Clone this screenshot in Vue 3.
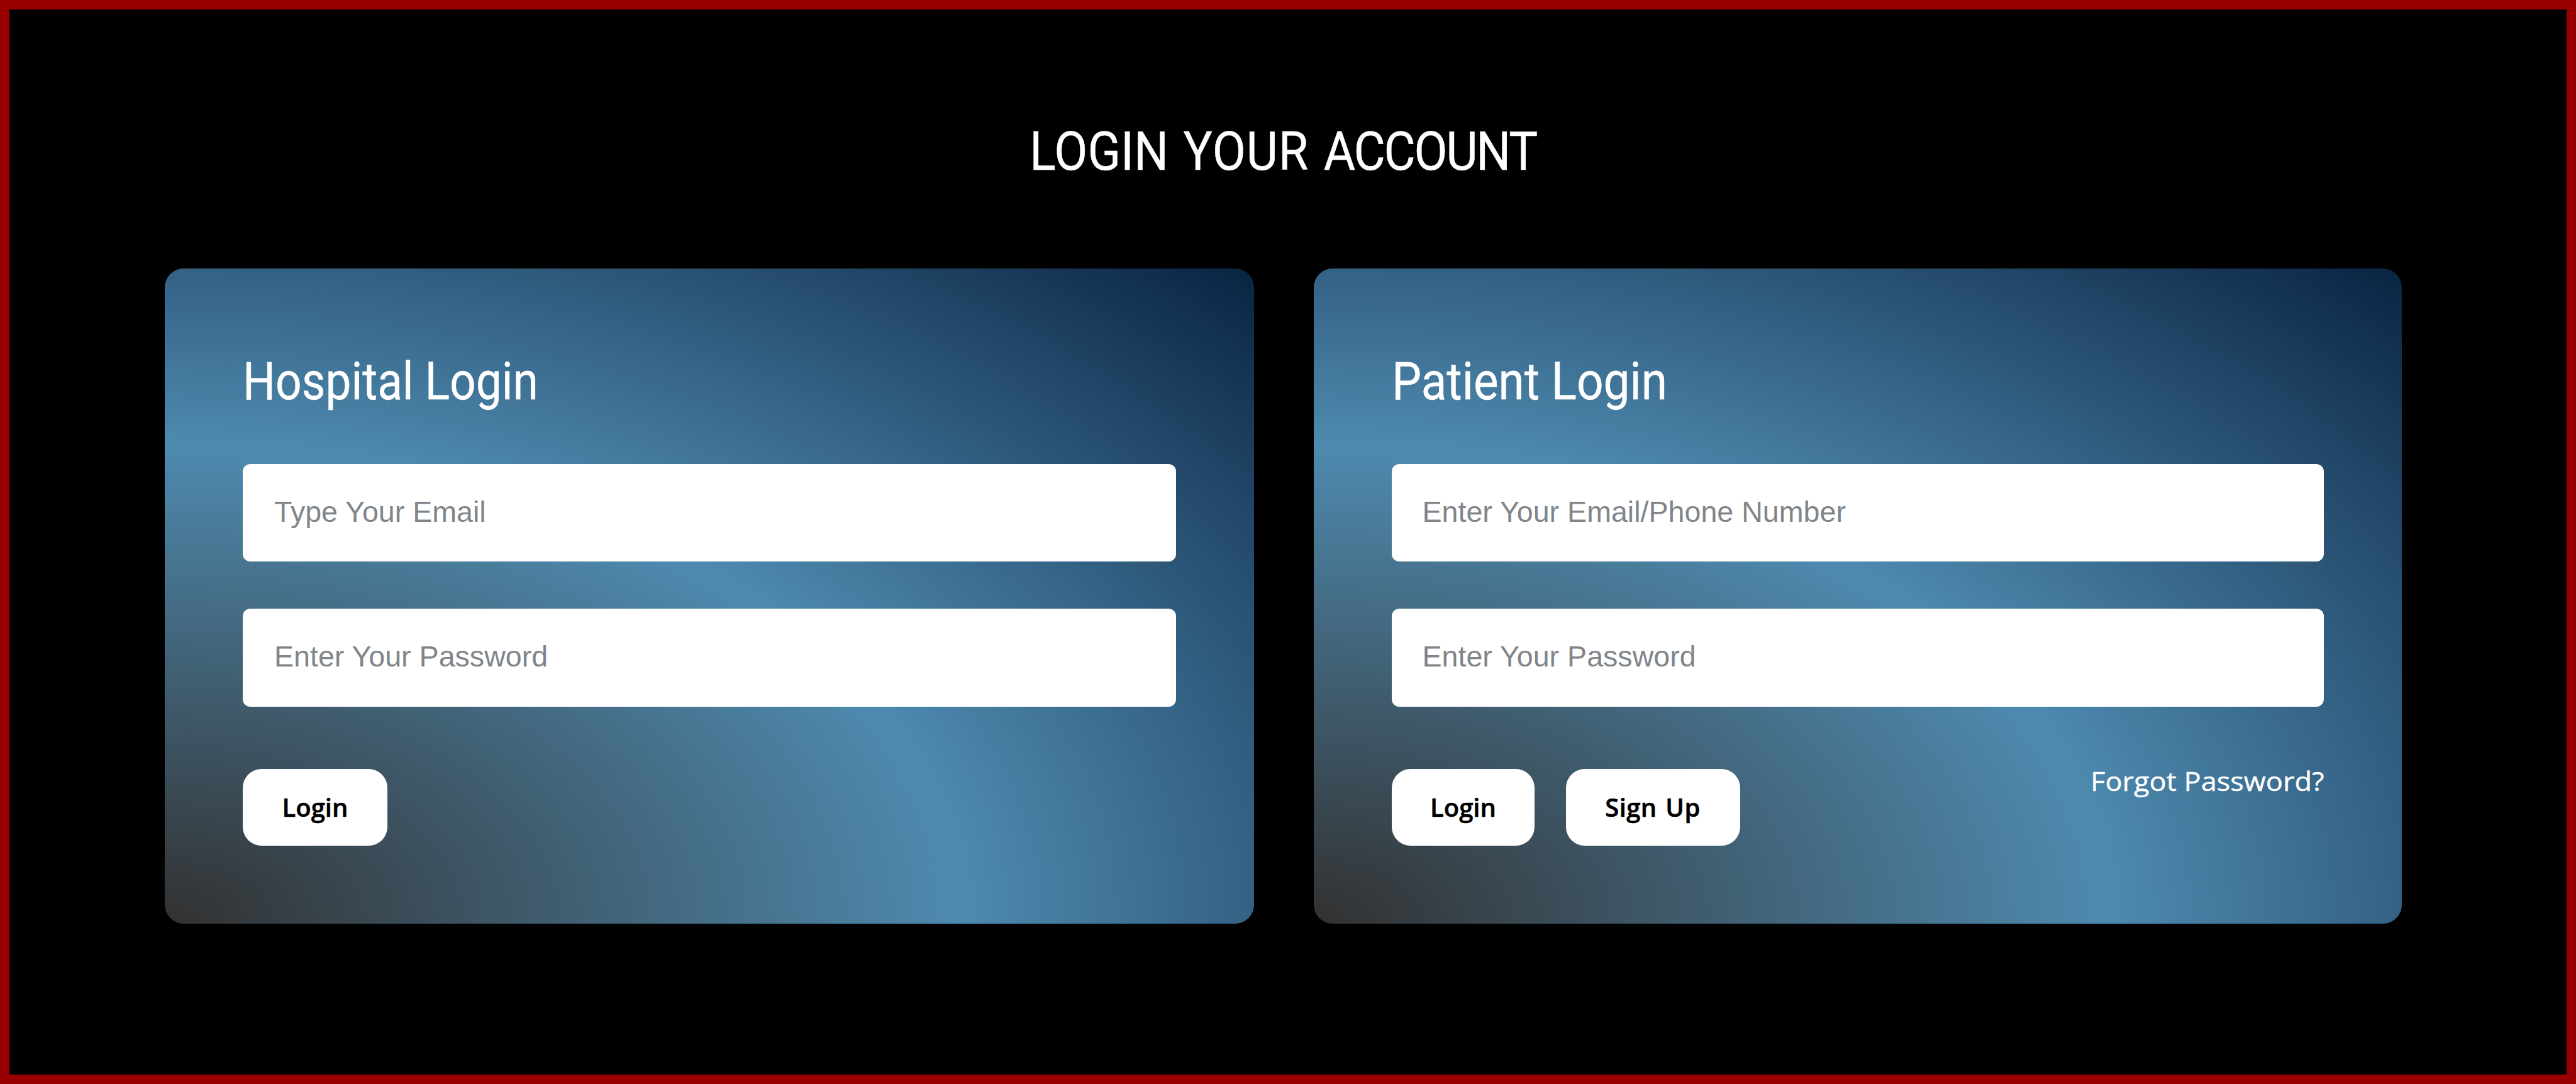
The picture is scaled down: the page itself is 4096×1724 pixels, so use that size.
<script setup>
import { ref } from 'vue'

const hospital = ref({ email: '', password: '' })
const patient = ref({ email: '', password: '' })
</script>

<template>
  <div class="page">
    <h1><span class="title">LOGIN <span class="your">YOUR</span> <span class="account">ACCOUNT</span></span></h1>

    <div class="cards">
      <form class="card hospital" @submit.prevent>
        <h2><span>Hospital Login</span></h2>
        <input v-model="hospital.email" type="text" placeholder="Type Your Email" />
        <input v-model="hospital.password" type="password" placeholder="Enter Your Password" />
        <div class="actions">
          <button>Login</button>
        </div>
      </form>

      <form class="card patient" @submit.prevent>
        <h2><span>Patient Login</span></h2>
        <input v-model="patient.email" type="text" placeholder="Enter Your Email/Phone Number" />
        <input v-model="patient.password" type="password" placeholder="Enter Your Password" />
        <div class="actions">
          <button>Login</button>
          <button class="signup">Sign Up</button>
          <a href="#" class="forgot">Forgot Password?</a>
        </div>
      </form>
    </div>
  </div>
</template>

<style>
body {
  margin: 0;
  background: #000;
}
</style>

<style scoped>
.page {
  box-sizing: border-box;
  width: 4096px;
  height: 1724px;
  border: 15px solid #990000;
  background: #000;
  padding: 174px 262px 0 247px;
  color: #fff;
  font-family: "Open Sans", sans-serif;
}

h1,
h2 {
  margin: 0;
  font-family: Roboto, sans-serif;
  font-weight: 400;
  white-space: nowrap;
  -webkit-text-stroke: 0.4px #fff;
}

h1 {
  height: 238px;
  font-size: 86px;
  line-height: 104px;
  text-align: center;
}

.title {
  display: inline-block;
  word-spacing: 5px;
  transform: scaleX(0.897);
}

.your {
  letter-spacing: 1px;
}

.account {
  letter-spacing: -2.4px;
}

h2 {
  height: 185.5px;
  font-size: 83px;
  line-height: 110px;
}

h2 span {
  display: inline-block;
  transform-origin: left;
}

.hospital h2 span {
  transform: scaleX(0.88);
}

.patient h2 span {
  transform: scaleX(0.9);
}

/* CARDS */
.cards {
  display: grid;
  grid-template-columns: 1732px 1730px;
  gap: 95px;
}

.card {
  box-sizing: border-box;
  height: 1041.5px;
  padding: 125px 124px 0;
  border-radius: 30px;
  background: radial-gradient(ellipse farthest-corner at left bottom, #323131 0%, #4e8aaf 51.5%, #0a2342 100%);
}

input {
  display: block;
  box-sizing: border-box;
  width: 100%;
  height: 155.5px;
  margin: 0 0 75px;
  padding: 0 48.5px 3px;
  border: none;
  border-radius: 12px;
  background: #fff;
  font-family: "Liberation Sans", Arial, sans-serif;
  font-size: 46.6px;
}

.hospital input {
  padding-left: 50px;
}

input::placeholder {
  color: #80858a;
  opacity: 1;
}

/* BUTTONS */
.actions {
  display: flex;
  gap: 49.5px;
  padding-top: 24px;
}

button {
  width: 227px;
  height: 122px;
  padding: 0 0 1px;
  border: none;
  border-radius: 30px;
  background: #fff;
  color: #000;
  font-family: "Open Sans", sans-serif;
  font-size: 40px;
  font-weight: 600;
  -webkit-text-stroke: 0.6px #000;
}

.hospital button {
  width: 230px;
}

button.signup {
  width: 277px;
  letter-spacing: 0.4px;
  word-spacing: 3px;
}

.forgot {
  margin-left: auto;
  color: #fff;
  font-size: 42px;
  line-height: 37px;
  text-decoration: none;
  transform: scaleX(1.075);
  transform-origin: right;
  -webkit-text-stroke: 0.4px #fff;
}
</style>
